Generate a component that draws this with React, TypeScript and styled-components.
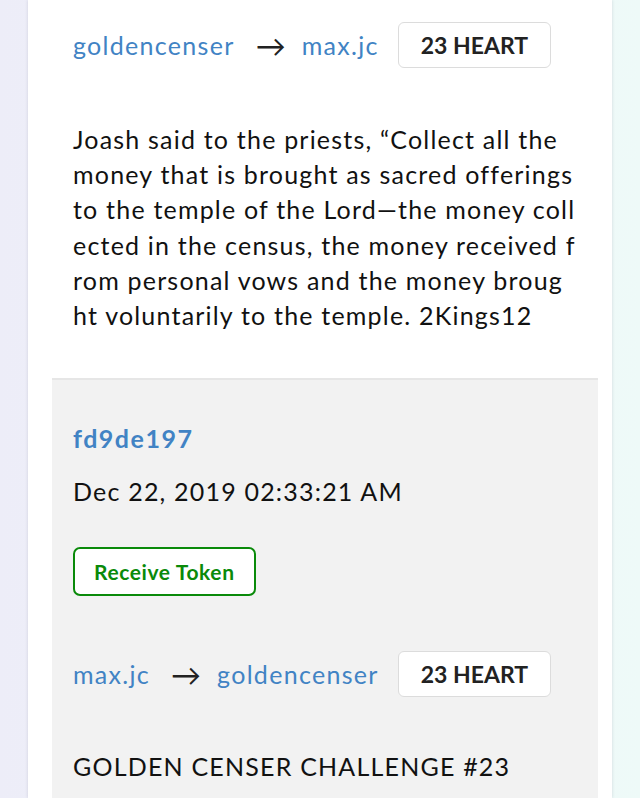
import React from 'react'
import styled, { createGlobalStyle } from 'styled-components'

const GlobalStyle = createGlobalStyle`
  html, body {
    margin: 0;
    padding: 0;
  }
  body {
    font-family: Lato, 'Noto Sans', sans-serif;
    color: #111;
    background: linear-gradient(to right, #ededf8 0%, #eff3f9 50%, #eefaf8 100%);
    overflow: hidden;
  }
`

const Page = styled.div`
  height: 798px;
  padding: 0 28px;
  box-sizing: border-box;
`

const Card = styled.div`
  background: #fff;
  height: 100%;
  padding: 0 14px 0 24px;
  box-shadow: 0 0 3px rgba(60, 60, 90, 0.18);
  overflow: hidden;
`

const Item = styled.div<{ shaded?: boolean }>`
  padding: ${({ shaded }) => (shaded ? '41px 21px 60px' : '22px 21px 45px')};
  background: ${({ shaded }) => (shaded ? '#f2f2f2' : 'transparent')};
  border-top: ${({ shaded }) => (shaded ? '2px solid #e6e6e6' : 'none')};
`

const TransferRow = styled.div`
  display: flex;
  align-items: center;
  height: 46px;
`

const UserLink = styled.a`
  color: #4183c4;
  font-size: 25px;
  letter-spacing: 1.3px;
  text-decoration: none;
`

const Arrow = styled.span`
  font-size: 30px;
  color: #222;
  margin: 0 16px 0 21px;
`

const Amount = styled.div`
  margin-left: 19px;
  height: 46px;
  box-sizing: border-box;
  padding: 0 22px;
  display: flex;
  align-items: center;
  border: 1.5px solid #dcdcdc;
  border-radius: 6px;
  background: #fff;
  font-size: 23px;
  font-weight: 700;
  color: #222;
`

const Memo = styled.p<{ gap: number }>`
  margin: ${({ gap }) => gap}px 0 0;
  font-size: 25px;
  letter-spacing: 1.2px;
  line-height: 35.2px;
  word-break: break-all;
  color: #111;
`

const TxId = styled.a`
  display: block;
  color: #4183c4;
  font-size: 25px;
  letter-spacing: 1.5px;
  font-weight: 700;
  text-decoration: none;
  line-height: 34px;
`

const Timestamp = styled.div`
  margin-top: 19px;
  font-size: 25px;
  letter-spacing: 1.2px;
  line-height: 34px;
`

const ReceiveButton = styled.button`
  margin: 39px 0 55px;
  height: 49px;
  padding: 0 19px;
  border: 2px solid #0a8a0a;
  border-radius: 7px;
  background: #fff;
  color: #0a8a0a;
  font-family: Lato, sans-serif;
  font-size: 21px;
  letter-spacing: 0.6px;
  font-weight: 700;
`

const transfers = [
  {
    from: 'goldencenser',
    to: 'max.jc',
    amount: '23 HEART',
    memo:
      'Joash said to the priests, \u201cCollect all the money that is brought as sacred offerings to the temple of the Lord\u2014the money collected in the census, the money received from personal vows and the money brought voluntarily to the temple. 2Kings12',
  },
  {
    from: 'max.jc',
    to: 'goldencenser',
    amount: '23 HEART',
    memo: 'GOLDEN CENSER CHALLENGE #23',
  },
]

function Transfer({ from, to, amount }: { from: string; to: string; amount: string }) {
  return (
    <TransferRow>
      <UserLink href="#">{from}</UserLink>
      <Arrow>→</Arrow>
      <UserLink href="#">{to}</UserLink>
      <Amount>{amount}</Amount>
    </TransferRow>
  )
}

export default function App() {
  const [first, second] = transfers
  return (
    <Page>
      <GlobalStyle />
      <Card>
        <Item>
          <Transfer {...first} />
          <Memo gap={54}>{first.memo}</Memo>
        </Item>
        <Item shaded>
          <TxId href="#">fd9de197</TxId>
          <Timestamp>Dec 22, 2019 02:33:21 AM</Timestamp>
          <ReceiveButton>Receive Token</ReceiveButton>
          <Transfer {...second} />
          <Memo gap={52}>{second.memo}</Memo>
        </Item>
      </Card>
    </Page>
  )
}
